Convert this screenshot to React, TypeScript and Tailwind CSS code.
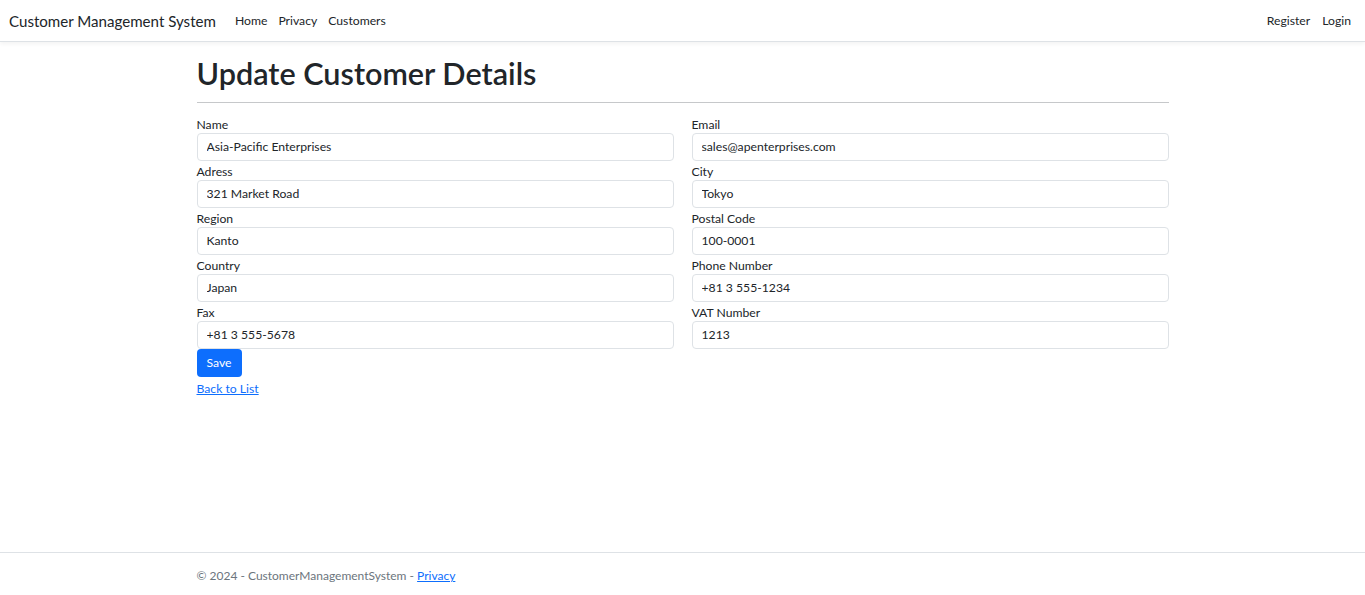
import React from 'react';

const fields: [string, string][] = [
  ['Name', 'Asia-Pacific Enterprises'],
  ['Email', 'sales@apenterprises.com'],
  ['Adress', '321 Market Road'],
  ['City', 'Tokyo'],
  ['Region', 'Kanto'],
  ['Postal Code', '100-0001'],
  ['Country', 'Japan'],
  ['Phone Number', '+81 3 555-1234'],
  ['Fax', '+81 3 555-5678'],
  ['VAT Number', '1213'],
];

export default function App() {
  return (
    <div
      className="min-h-[595px] flex flex-col bg-white text-[#212529]"
      style={{ fontFamily: 'Lato, "Noto Sans", sans-serif' }}
    >
      {/* navbar */}
      <nav className="h-[42px] flex items-center border-b border-[#dee2e6] shadow-[0_2px_4px_rgba(0,0,0,0.05)] px-[9px] pt-px">
        <span className="text-[15.1px] text-[#212529] mr-[19px]">Customer Management System</span>
        <div className="flex gap-[11px] text-[12.2px] text-[#212529]">
          <a>Home</a>
          <a>Privacy</a>
          <a>Customers</a>
        </div>
        <div className="ml-auto flex gap-[12px] text-[12.2px] pr-[5px]">
          <a>Register</a>
          <a>Login</a>
        </div>
      </nav>

      <main className="w-[972px] mx-auto flex-1 pt-[14px]">
        <h1 className="text-[30.6px] font-semibold leading-[1.2] mb-[9px]">Update Customer Details</h1>
        <hr className="border-0 border-t border-[#c6c8ca] mb-[11px]" />
        <div className="grid grid-cols-2 gap-x-[18px]">
          {fields.map(([label, value]) => (
            <div key={label} className="flex flex-col">
              <label className="text-[12.2px] leading-[19px] pt-px -mb-px">{label}</label>
              <input
                readOnly
                value={value}
                className="h-[28px] border border-[#dee2e6] rounded-[4px] px-[9px] text-[12.2px] text-[#212529] outline-none"
              />
            </div>
          ))}
        </div>
        <button className="h-[28px] w-[45px] rounded-[4px] bg-[#0d6efd] text-white text-[12.2px]">Save</button>
        <div className="leading-[19px]">
          <a className="text-[12.2px] text-[#0d6efd] underline">Back to List</a>
        </div>
      </main>

      <footer className="border-t border-[#dee2e6] h-[43px] pt-[13px]">
        <div className="w-[972px] mx-auto text-[12px] leading-[19px] text-[#6c757d]">
          © 2024 - CustomerManagementSystem - <a className="text-[#0d6efd] underline">Privacy</a>
        </div>
      </footer>
    </div>
  );
}
